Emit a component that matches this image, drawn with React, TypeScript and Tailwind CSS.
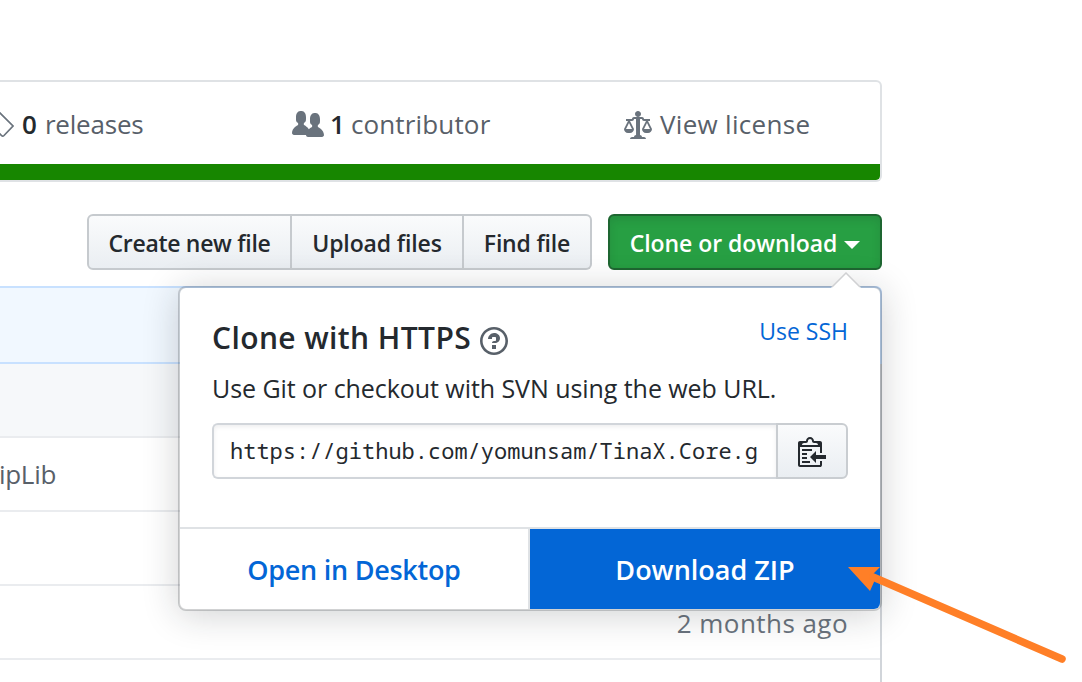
import type { ReactNode } from "react";

type IconProps = { path: string; width: 14 | 16; className?: string };

function Octicon({ path, width, className = "" }: IconProps) {
  return (
    <svg
      viewBox={width === 16 ? "0 0 16 16" : "0 0 14 16"}
      className={`${width === 16 ? "w-8" : "w-7"} h-8 shrink-0 fill-current ${className}`}
    >
      <path fillRule="evenodd" d={path} />
    </svg>
  );
}

const PEOPLE =
  "M16 12.999c0 .439-.45 1-1 1H7.995c-.539 0-.994-.447-.995-.999H1c-.54 0-1-.561-1-1 0-2.634 3-4 3-4s.229-.409 0-1c-.841-.621-1.058-.59-1-3 .058-2.419 1.367-3 2.5-3s2.442.58 2.5 3c.058 2.41-.159 2.379-1 3-.229.59 0 1 0 1s1.549.711 2.42 2.088C9.196 9.369 10 8.999 10 8.999s.229-.409 0-1c-.841-.62-1.058-.59-1-3 .058-2.419 1.367-3 2.5-3s2.437.581 2.495 3c.059 2.41-.158 2.38-1 3-.229.59 0 1 0 1s3.005 1.366 3.005 4";
const LAW =
  "M7 4c-.83 0-1.5-.67-1.5-1.5S6.17 1 7 1s1.5.67 1.5 1.5S7.83 4 7 4zm7 6c0 1.11-.89 2-2 2h-1c-1.11 0-2-.89-2-2l2-4h-1c-.55 0-1-.45-1-1H8v8c.42 0 1 .45 1 1h1c.42 0 1 .45 1 1H3c0-.55.58-1 1-1h1c0-.55.58-1 1-1h.03L6 5H5c0 .55-.45 1-1 1H3l2 4c0 1.11-.89 2-2 2H2c-1.11 0-2-.89-2-2l2-4H1V5h3c0-.55.45-1 1-1h4c.55 0 1 .45 1 1h3v1h-1l2 4zM2.5 7L1 10h3L2.5 7zM13 10l-1.5-3-1.5 3h3z";
const QUESTION =
  "M6 10h2v2H6v-2zm4-3.5C10 8.64 8 9 8 9H6c0-.55.45-1 1-1h.5c.28 0 .5-.22.5-.5v-1c0-.28-.22-.5-.5-.5h-1c-.28 0-.5.22-.5.5V7H4c0-1.5 1.5-3 3-3s3 1 3 2.5zM7 2.3c3.14 0 5.7 2.56 5.7 5.7s-2.56 5.7-5.7 5.7A5.71 5.71 0 0 1 1.3 8c0-3.14 2.56-5.7 5.7-5.7zM7 1C3.14 1 0 4.14 0 8s3.14 7 7 7 7-3.14 7-7-3.14-7-7-7z";
const CLIPPY =
  "M2 13h4v1H2v-1zm5-6H2v1h5V7zm2 3V8l-3 3 3 3v-2h5v-2H9zM4.5 9H2v1h2.5V9zM2 12h2.5v-1H2v1zm9 1h1v2c-.02.28-.11.52-.3.7-.19.18-.42.28-.7.3H1c-.55 0-1-.45-1-1V4c0-.55.45-1 1-1h3c0-1.11.89-2 2-2 1.11 0 2 .89 2 2h3c.55 0 1 .45 1 1v5h-1V6H1v9h10v-2zM2 5h8c0-.55-.45-1-1-1H8c-.55 0-1-.45-1-1s-.45-1-1-1-1 .45-1 1-.45 1-1 1H3c-.55 0-1 .45-1 1z";

function Summary() {
  return (
    <div className="mt-20 h-[102px] w-[882px] overflow-hidden rounded-r-md border-2 border-l-0 border-[#dfe2e5]">
      <div className="flex h-[82px] items-center pt-0.5 text-[26px] text-[#586069]">
        <div className="flex w-[292px] items-center">
          <svg viewBox="0 0 14 32" className="h-8 w-3.5 fill-none stroke-[#6a737d] stroke-[1.7]">
            <path d="M-3 2 L13 18 L4 27.5 Q2.7 28.8 1.5 27.5 L-8 17.5" />
          </svg>
          <span className="ml-2 font-semibold text-[#24292e]">0</span>
          <span className="ml-2 tracking-[-0.2px]">releases</span>
        </div>
        <div className="flex w-[332px] items-center">
          <Octicon path={PEOPLE} width={16} className="mt-px text-[#6a737d]" />
          <span className="ml-1.5 font-semibold text-[#24292e]">1</span>
          <span className="ml-1.5 tracking-[0.15px]">contributor</span>
        </div>
        <div className="flex items-center">
          <Octicon path={LAW} width={14} className="mt-px text-[#6a737d]" />
          <span className="ml-2 tracking-[0.3px]">View license</span>
        </div>
      </div>
      <div className="h-4 rounded-br-sm bg-[#178600]" />
    </div>
  );
}

function ToolButton({ className, children }: { className: string; children: ReactNode }) {
  return (
    <button
      className={`flex h-14 items-center justify-center border-2 border-[#c6cace] bg-linear-to-b from-[#fafbfc] to-[#eaeef2] pt-0.5 text-[23px] font-semibold whitespace-nowrap text-[#24292e] ${className}`}
    >
      {children}
    </button>
  );
}

function Toolbar() {
  return (
    <div className="mt-8 ml-[87px] flex h-14 w-[795px]">
      <ToolButton className="w-[205px] rounded-l-md tracking-[-0.3px]">Create new file</ToolButton>
      <ToolButton className="w-[172px] border-l-0 tracking-[-0.13px]">Upload files</ToolButton>
      <ToolButton className="w-[128px] rounded-r-md border-l-0 tracking-[-0.18px]">Find file</ToolButton>
      <button className="ml-4 flex h-14 w-[274px] items-center justify-center rounded-md border-2 border-[#1e6631] bg-[#279f43] pt-0.5 text-[23px] font-semibold whitespace-nowrap text-white shadow-[inset_0_4px_8px_rgba(27,31,35,0.12)]">
        <span className="tracking-[-0.06px]">Clone or download</span>
        <span className="mt-1 ml-[7px] border-x-8 border-t-8 border-x-transparent border-t-white" />
      </button>
    </div>
  );
}

function FileTable() {
  return (
    <div className="mt-4 w-[882px]">
      <div className="h-[78px] rounded-tr-md border-2 border-l-0 border-[#c8e1ff] bg-[#f1f8ff]" />
      <div className="h-[318px] border-r-2 border-[#d1d5da] text-[26px] text-[#6a737d]">
        <div className="h-[74px] border-b-2 border-[#eaecef] bg-[#f6f8fa]" />
        <div className="flex h-[74px] items-center border-b-2 border-[#eaecef] text-[#586069]">
          <span className="ml-[-1px] tracking-[-0.3px]">ipLib</span>
        </div>
        <div className="h-[74px] border-b-2 border-[#eaecef]" />
        <div className="flex h-[74px] items-center justify-end border-b-2 border-[#eaecef] pt-0.5 pr-8">
          <span className="tracking-[0.45px]">2 months ago</span>
        </div>
      </div>
    </div>
  );
}

function ClonePopover() {
  return (
    <div className="absolute top-[286px] left-[178px] h-[325px] w-[704px] rounded-lg border-2 border-[#1b1f23]/20 bg-white bg-clip-padding text-[#24292e] shadow-[0_4px_36px_rgba(27,31,35,0.2)]">
      <svg viewBox="0 0 30 16" className="absolute -top-[16px] right-[19px] h-4 w-[30px]">
        <path d="M0 16 L15 1 L30 16Z" fill="#fff" />
        <path d="M1 15 L15 1 L29 15" fill="none" stroke="#d0d1d3" strokeWidth="1.5" />
      </svg>
      <div className="h-[239px] px-8 pt-7">
        <div className="flex h-11 items-start">
          <h2 className="text-[30px] leading-[44px] font-semibold tracking-[0.4px] whitespace-nowrap">
            Clone with HTTPS
          </h2>
          <Octicon path={QUESTION} width={14} className="mt-[9px] ml-[9px] text-[#586069]" />
          <a className="ml-auto text-[23px] leading-[30px] whitespace-nowrap text-[#0366d6]">Use SSH</a>
        </div>
        <p className="mt-2 text-[25px] leading-10 tracking-[-0.06px] whitespace-nowrap">
          Use Git or checkout with SVN using the web URL.
        </p>
        <div className="mt-[15px] flex h-14">
          <div className="flex w-[564px] items-center rounded-l-md border-2 border-r-0 border-[#d1d5da] pb-0.5 pl-4 font-['Noto_Sans_Mono','DejaVu_Sans_Mono',monospace] text-[22px] whitespace-nowrap shadow-[inset_0_2px_4px_rgba(27,31,35,0.075)]">
            https://github.com/yomunsam/TinaX.Core.g
          </div>
          <button className="flex w-[72px] items-center justify-center rounded-r-md border-2 border-[#c9cdd1] bg-linear-to-b from-[#fafbfc] to-[#eaeef2]">
            <Octicon path={CLIPPY} width={14} />
          </button>
        </div>
      </div>
      <div className="flex h-[82px] border-t-2 border-[#dfe2e5] text-[27px] font-semibold whitespace-nowrap">
        <a className="flex w-[350px] items-center justify-center border-r-2 border-[#dfe2e5] pt-0.5 tracking-[-0.27px] text-[#0366d6]">
          Open in Desktop
        </a>
        <a className="flex w-[350px] items-center justify-center rounded-br-md bg-[#0366d6] pt-0.5 text-white">
          Download ZIP
        </a>
      </div>
    </div>
  );
}

function Arrow() {
  return (
    <svg viewBox="0 0 230 110" className="absolute top-[560px] left-[842px] h-[110px] w-[230px]">
      <path d="M6 7 L38 7 L31 14 L32 22 L28 31Z" fill="#ff7f27" />
      <path d="M31 17 L220 99" stroke="#ff7f27" strokeWidth="7.5" strokeLinecap="round" />
    </svg>
  );
}

export default function App() {
  return (
    <main className="relative flex h-[682px] w-[1082px] flex-col overflow-hidden bg-white font-['Open_Sans','Noto_Sans',sans-serif]">
      <Summary />
      <Toolbar />
      <FileTable />
      <ClonePopover />
      <Arrow />
    </main>
  );
}
